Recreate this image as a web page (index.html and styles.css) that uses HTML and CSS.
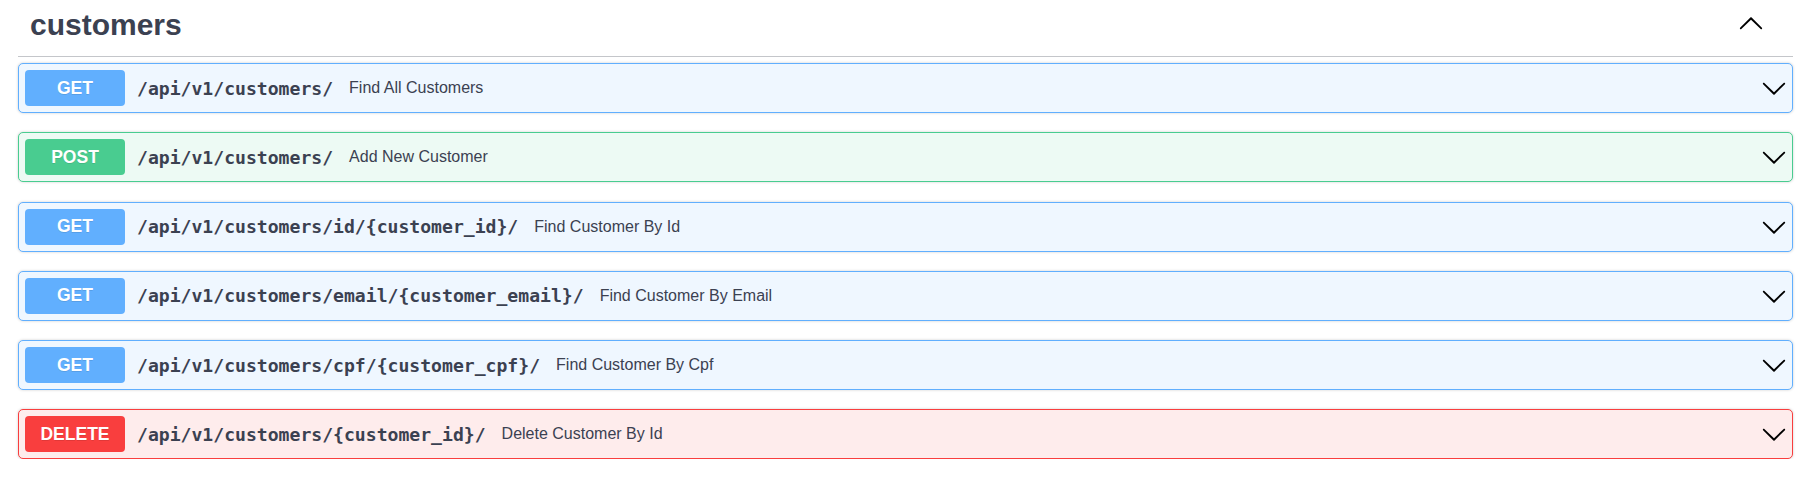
FILE: index.html
```html
<!DOCTYPE html>
<html>
<head>
<meta charset="utf-8">
<link rel="stylesheet" href="styles.css">
</head>
<body>
<div class="section">
  <div class="tag">
    <h3 class="tag-title">customers</h3>
    <svg class="tag-arrow" viewBox="0 0 20 20" width="26" height="26"><path d="M17.418 6.109c.272-.268.709-.268.979 0s.271.701 0 .969l-7.908 7.83c-.27.268-.707.268-.979 0l-7.908-7.83c-.27-.268-.27-.701 0-.969.271-.268.709-.268.979 0L10 13.25l7.418-7.141z" transform="rotate(180 10 10)"/></svg>
  </div>
  <div class="ops">
    <div class="op get">
      <span class="method">GET</span>
      <span class="path">/api/v1/customers/</span>
      <span class="desc">Find All Customers</span>
      <svg class="arrow" viewBox="0 0 20 20" width="26" height="26"><path d="M17.418 6.109c.272-.268.709-.268.979 0s.271.701 0 .969l-7.908 7.83c-.27.268-.707.268-.979 0l-7.908-7.830c-.27-.268-.27-.701 0-.969.271-.268.709-.268.979 0L10 13.25l7.418-7.141z"/></svg>
    </div>
    <div class="op post">
      <span class="method">POST</span>
      <span class="path">/api/v1/customers/</span>
      <span class="desc">Add New Customer</span>
      <svg class="arrow" viewBox="0 0 20 20" width="26" height="26"><path d="M17.418 6.109c.272-.268.709-.268.979 0s.271.701 0 .969l-7.908 7.83c-.27.268-.707.268-.979 0l-7.908-7.83c-.27-.268-.27-.701 0-.969.271-.268.709-.268.979 0L10 13.25l7.418-7.141z"/></svg>
    </div>
    <div class="op get">
      <span class="method">GET</span>
      <span class="path">/api/v1/customers/id/{customer_id}/</span>
      <span class="desc">Find Customer By Id</span>
      <svg class="arrow" viewBox="0 0 20 20" width="26" height="26"><path d="M17.418 6.109c.272-.268.709-.268.979 0s.271.701 0 .969l-7.908 7.83c-.27.268-.707.268-.979 0l-7.908-7.83c-.27-.268-.27-.701 0-.969.271-.268.709-.268.979 0L10 13.25l7.418-7.141z"/></svg>
    </div>
    <div class="op get">
      <span class="method">GET</span>
      <span class="path">/api/v1/customers/email/{customer_email}/</span>
      <span class="desc">Find Customer By Email</span>
      <svg class="arrow" viewBox="0 0 20 20" width="26" height="26"><path d="M17.418 6.109c.272-.268.709-.268.979 0s.271.701 0 .969l-7.908 7.83c-.27.268-.707.268-.979 0l-7.908-7.83c-.27-.268-.27-.701 0-.969.271-.268.709-.268.979 0L10 13.25l7.418-7.141z"/></svg>
    </div>
    <div class="op get">
      <span class="method">GET</span>
      <span class="path">/api/v1/customers/cpf/{customer_cpf}/</span>
      <span class="desc">Find Customer By Cpf</span>
      <svg class="arrow" viewBox="0 0 20 20" width="26" height="26"><path d="M17.418 6.109c.272-.268.709-.268.979 0s.271.701 0 .969l-7.908 7.83c-.27.268-.707.268-.979 0l-7.908-7.83c-.27-.268-.27-.701 0-.969.271-.268.709-.268.979 0L10 13.25l7.418-7.141z"/></svg>
    </div>
    <div class="op delete">
      <span class="method">DELETE</span>
      <span class="path">/api/v1/customers/{customer_id}/</span>
      <span class="desc">Delete Customer By Id</span>
      <svg class="arrow" viewBox="0 0 20 20" width="26" height="26"><path d="M17.418 6.109c.272-.268.709-.268.979 0s.271.701 0 .969l-7.908 7.83c-.27.268-.707.268-.979 0l-7.908-7.83c-.27-.268-.27-.701 0-.969.271-.268.709-.268.979 0L10 13.25l7.418-7.141z"/></svg>
    </div>
  </div>
</div>
</body>
</html>
```

FILE: styles.css
```css
html, body {
  margin: 0;
  padding: 0;
  background: #fff;
}
body {
  font-family: "Liberation Sans", Arial, sans-serif;
  color: #3b4151;
}
.section {
  padding: 0 9px 0 18px;
}
.tag {
  display: flex;
  align-items: flex-start;
  padding: 7px 29px 13px 12px;
  border-bottom: 1px solid rgba(59, 65, 81, 0.3);
  margin-bottom: 6px;
}
.tag-title {
  flex: 1;
  margin: 0;
  font-size: 30px;
  line-height: 36px;
  font-weight: bold;
  color: #3b4151;
}
.tag-arrow {
  margin-top: 4px;
  fill: #000;
}
.ops {
  display: flex;
  flex-direction: column;
  gap: 19.25px;
}
.op {
  display: flex;
  align-items: center;
  height: 48px;
  padding: 0 5px 0 6px;
  border: 1px solid;
  border-radius: 5px;
  box-shadow: 0 0 3px rgba(0, 0, 0, 0.19);
}
.op.get { background: #eff7ff; border-color: #61affe; }
.op.post { background: #edfaf4; border-color: #49cc90; }
.op.delete { background: #feecec; border-color: #f93e3e; }
.method {
  width: 100px;
  height: 36px;
  display: flex;
  align-items: center;
  justify-content: center;
  border-radius: 4px;
  color: #fff;
  font-size: 17.5px;
  font-weight: bold;
  text-shadow: 0 1px 0 rgba(0, 0, 0, 0.1);
}
.op.get .method { background: #61affe; }
.op.post .method { background: #49cc90; }
.op.delete .method { background: #f93e3e; }
.path {
  margin-left: 12px;
  padding-right: 16px;
  font-family: "DejaVu Sans Mono", monospace;
  font-weight: bold;
  font-size: 18.1px;
  color: #3b4151;
}
.desc {
  flex: 1;
  font-size: 16px;
  color: #3b4151;
}
.arrow {
  fill: #000;
}
```
